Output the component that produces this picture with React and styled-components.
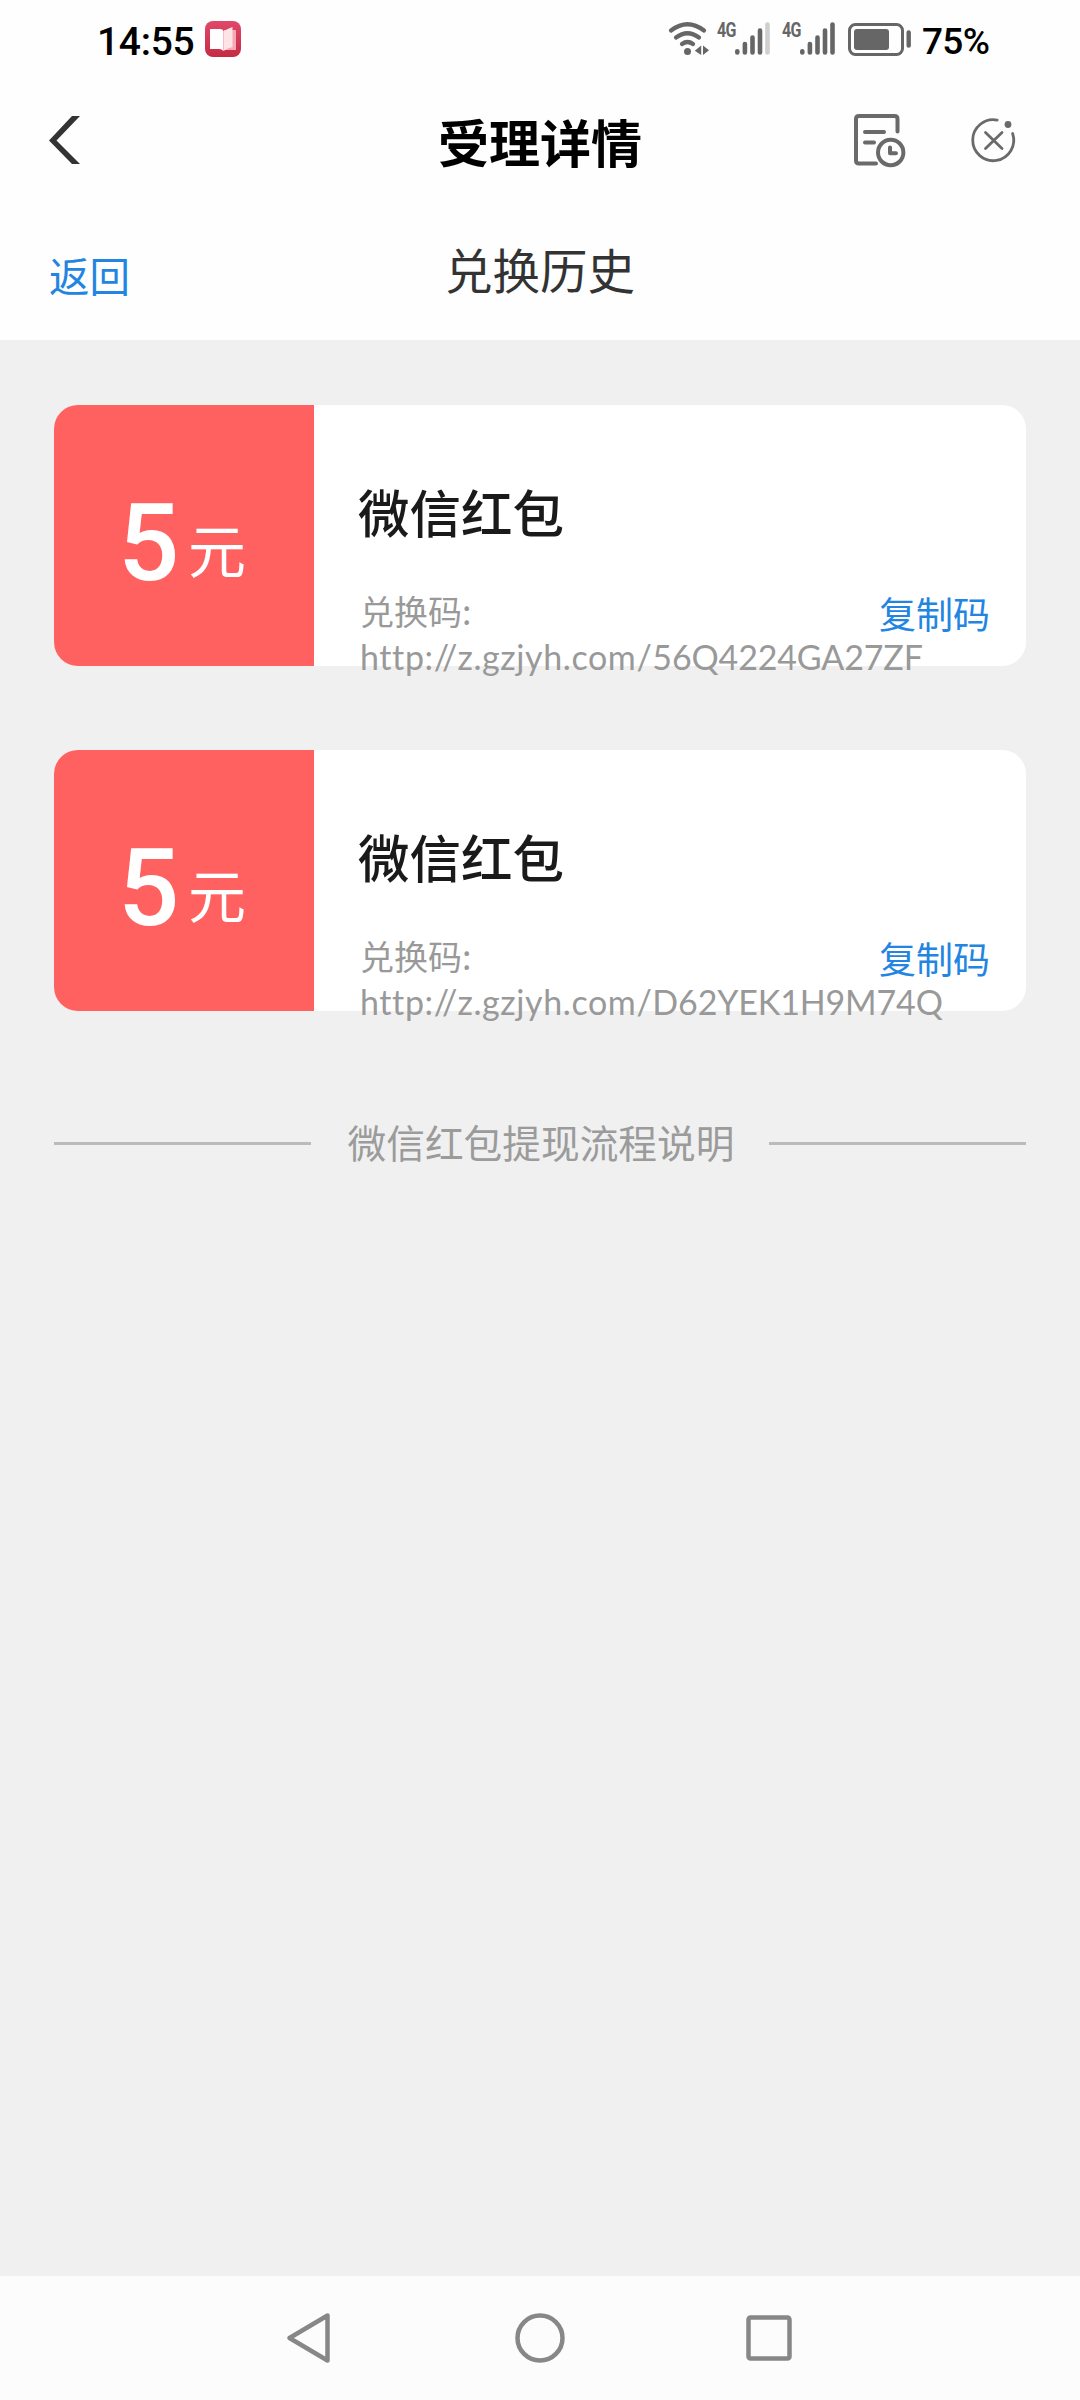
import React from 'react';
import styled, { createGlobalStyle } from 'styled-components';

const Global = createGlobalStyle`
  * { box-sizing: border-box; }
  body { margin: 0; background: #f0f0f0; }
  svg { display: block; flex: none; }
`;

const cjk = `'Noto Sans CJK SC', sans-serif`;

const Screen = styled.div`
  width: 1080px;
  height: 2400px;
  display: flex;
  flex-direction: column;
  background: #f0f0f0;
  font-family: ${cjk};
  white-space: nowrap;
  overflow: hidden;
`;

const StatusBar = styled.div`
  height: 80px;
  display: flex;
  align-items: flex-start;
  justify-content: space-between;
  background: #fefefe;
  padding: 0 90px 0 97px;
`;

const StatusGroup = styled.div`
  display: flex;
  align-items: flex-start;
`;

const Clock = styled.span`
  width: 108px;
  font-family: 'Roboto', sans-serif;
  font-size: 39px;
  line-height: 56px;
  font-weight: 500;
  letter-spacing: -0.3px;
  padding-top: 14px;
  color: #000;
`;

const Percent = styled.span`
  width: 68px;
  margin-left: 10px;
  font-family: 'Roboto', sans-serif;
  font-size: 37px;
  line-height: 54px;
  font-weight: 500;
  letter-spacing: -0.7px;
  padding-top: 15px;
  color: #000;
`;

const Book = styled.div`
  padding-top: 21px;
`;

const Network = styled.span`
  width: 17px;
  margin-left: ${(p) => p.$gap}px;
  padding-top: 19px;
  font-family: 'Roboto', sans-serif;
  font-size: 20px;
  line-height: 22px;
  font-weight: 700;
  letter-spacing: -1px;
  transform: scaleX(0.8);
  transform-origin: left;
  color: #666;
`;

const BatterySlot = styled.div`
  margin-left: 13px;
`;

const NavBar = styled.header`
  height: 120px;
  display: grid;
  grid-template-columns: 1fr auto 1fr;
  align-items: center;
  background: #fefefe;
  padding: 0 48px;
`;

const NavSide = styled.div`
  display: flex;
  align-items: center;
`;

const NavActions = styled(NavSide)`
  justify-content: flex-end;
  gap: 64px;
  padding-right: 14px;
`;

const NavTitle = styled.h1`
  margin: 0;
  padding-top: 1px;
  font-size: 51px;
  line-height: 76px;
  font-weight: 700;
  color: #000;
`;

const SubBar = styled.div`
  height: 140px;
  display: grid;
  grid-template-columns: 1fr auto 1fr;
  align-items: start;
  background: #fefefe;
  padding: 0 48px;
`;

const BackLink = styled.a`
  font-size: 40.5px;
  line-height: 60px;
  padding: 45px 0 0 1px;
  color: #2385e2;
`;

const SubTitle = styled.h2`
  margin: 0;
  padding-top: 34px;
  font-size: 47.5px;
  line-height: 70px;
  font-weight: 400;
  color: #333;
`;

const Content = styled.main`
  flex: 1;
  display: flex;
  flex-direction: column;
  padding: 65px 54px 0;
`;

const Cards = styled.div`
  display: flex;
  flex-direction: column;
  gap: 84px;
`;

const Card = styled.article`
  height: 261px;
  display: flex;
  background: #fff;
  border-radius: 24px;
`;

const Amount = styled.div`
  width: 260px;
  display: flex;
  align-items: flex-start;
  background: #ff6060;
  border-radius: 24px 0 0 24px;
  padding-left: 64px;
  color: #fff;
`;

const Digit = styled.span`
  width: 70px;
  padding-top: 75px;
  font-family: 'Roboto', sans-serif;
  font-size: 108px;
  line-height: 126px;
  font-weight: 500;
`;

const Unit = styled.span`
  padding-top: 103px;
  font-size: 58px;
  line-height: 80px;
  font-weight: 400;
`;

const Info = styled.div`
  flex: 1;
  min-width: 0;
  padding: 68px 36px 0 44px;
`;

const CardTitle = styled.h3`
  margin: 0 0 39px;
  font-size: 51.5px;
  line-height: 76px;
  font-weight: 500;
  color: #1a1a1a;
`;

const CodeRow = styled.div`
  display: flex;
  justify-content: space-between;
  height: 44px;
`;

const Code = styled.div`
  width: 400px;
  padding-left: 2px;
  font-size: 34px;
  line-height: 45px;
  color: #999;
`;

const Url = styled.div`
  margin-top: 1px;
  font-family: 'Lato', ${cjk};
  font-variant-ligatures: none;
  letter-spacing: -0.15px;
`;

const Host = styled.span`
  letter-spacing: 0.6px;
`;

const Copy = styled.a`
  font-size: 37px;
  line-height: 50px;
  color: #2385e2;
`;

const Divider = styled.div`
  display: flex;
  align-items: center;
  justify-content: space-between;
  margin-top: 102px;
  height: 60px;
`;

const DividerText = styled.span`
  font-size: 38.7px;
  line-height: 60px;
  padding: 0 0 5px 2px;
  color: #9b9b9b;
`;

const Rule = styled.span`
  width: 257px;
  height: 3px;
  background: #bbb;
`;

const SystemNav = styled.nav`
  height: 124px;
  display: flex;
  align-items: center;
  justify-content: space-between;
  padding: 0 285px;
  background: #fcfcfc;
`;

const BookIcon = () => (
  <svg width="36" height="36" viewBox="0 0 36 36">
    <defs>
      <linearGradient id="bookBg" x1="0" y1="0" x2="0" y2="1">
        <stop offset="0" stopColor="#e0486a" />
        <stop offset="1" stopColor="#c52c42" />
      </linearGradient>
    </defs>
    <rect width="36" height="36" rx="8" fill="url(#bookBg)" />
    <path d="M19 9h12v20H19z" fill="#f6a9b4" />
    <path d="M5 8h10q3 0 3.500 2v20q-2-2-4-2H5z" fill="#fff" />
    <path d="M18.500 10q4-2 9-4v20q-5 1-9 4z" fill="#fde3e6" />
  </svg>
);

const WifiIcon = () => (
  <svg width="42" height="80" viewBox="668 0 42 80" fill="none" stroke="#666" strokeWidth="4.200" strokeLinecap="round">
    <path d="M671 30.500Q687.500 18 704 30.500" />
    <path d="M676 37.500Q687.500 29 699 37.500" />
    <path d="M682 44Q687.500 40 693 44" />
    <circle cx="687.500" cy="51.500" r="3.500" fill="#666" stroke="none" />
    <path d="M701.200 45.500v9.500l-6.400-4.200zM703 45.500v9.500l6-4.800z" fill="#666" stroke="none" />
  </svg>
);

const SignalIcon = ({ weak }) => (
  <svg width="36" height="80" viewBox="0 0 36 80" stroke="#666" strokeWidth="4.600" strokeLinecap="round">
    <path d="M3.300 51.200v1.300M10.900 44v8.500M18.500 37.500v15M26 30.500v22" />
    <path d="M33.500 24.500v28" stroke={weak ? '#cfcfcf' : '#666'} />
  </svg>
);

const BatteryIcon = () => (
  <svg width="64" height="80" viewBox="848 0 64 80">
    <rect x="849.500" y="24.500" width="53" height="30" rx="6" fill="none" stroke="#666" strokeWidth="3" />
    <rect x="854" y="29" width="35" height="21" rx="3" fill="#666" />
    <path d="M908.700 32.500v13" stroke="#666" strokeWidth="4.400" strokeLinecap="round" />
  </svg>
);

const ChevronIcon = () => (
  <svg width="33" height="50" viewBox="0 0 33 50">
    <path d="M24 1h8L8.500 25.500 32 49h-8L1 25.500z" fill="#333" />
  </svg>
);

const RecordIcon = () => (
  <svg width="56" height="56" viewBox="850 112 56 56" fill="none" stroke="#6a6a6a" strokeWidth="4" strokeLinecap="round" strokeLinejoin="round">
    <path d="M897.500 131.500V119q0-3-3-3H859q-3 0-3 3v41.500q0 3 3 3h17" />
    <path d="M865 132h19M865 142.500h9" />
    <circle cx="890.700" cy="152.500" r="12.700" />
    <path d="M890 147.500v5.800h6" />
  </svg>
);

const CloseIcon = () => (
  <svg width="48" height="48" viewBox="970 116 48 48" fill="none" stroke="#6a6a6a" strokeWidth="2.800" strokeLinecap="round">
    <path d="M997.200 120.100A20.500 20.500 0 1 0 1012.600 133.500" />
    <circle cx="1008" cy="124.500" r="3.400" fill="#6a6a6a" stroke="none" />
    <path d="M985.500 132.500l16.500 16M1002 132.500l-16.500 16" />
  </svg>
);

const host = 'http://z.gzjyh.com/';
const vouchers = ['56Q4224GA27ZF', 'D62YEK1H9M74Q'];

export default function App() {
  return (
    <Screen>
      <Global />
      <StatusBar>
        <StatusGroup>
          <Clock>14:55</Clock>
          <Book><BookIcon /></Book>
        </StatusGroup>
        <StatusGroup>
          <WifiIcon />
          <Network $gap={7}>4G</Network>
          <SignalIcon weak />
          <Network $gap={12}>4G</Network>
          <SignalIcon />
          <BatterySlot><BatteryIcon /></BatterySlot>
          <Percent>75%</Percent>
        </StatusGroup>
      </StatusBar>
      <NavBar>
        <NavSide><ChevronIcon /></NavSide>
        <NavTitle>受理详情</NavTitle>
        <NavActions>
          <RecordIcon />
          <CloseIcon />
        </NavActions>
      </NavBar>
      <SubBar>
        <BackLink>返回</BackLink>
        <SubTitle>兑换历史</SubTitle>
      </SubBar>
      <Content>
        <Cards>
          {vouchers.map((code) => (
            <Card key={code}>
              <Amount>
                <Digit>5</Digit>
                <Unit>元</Unit>
              </Amount>
              <Info>
                <CardTitle>微信红包</CardTitle>
                <CodeRow>
                  <Code>
                    兑换码:
                    <Url><Host>{host}</Host>{code}</Url>
                  </Code>
                  <Copy>复制码</Copy>
                </CodeRow>
              </Info>
            </Card>
          ))}
        </Cards>
        <Divider>
          <Rule />
          <DividerText>微信红包提现流程说明</DividerText>
          <Rule />
        </Divider>
      </Content>
      <SystemNav>
        <svg width="49" height="54" viewBox="0 0 49 54" fill="none" stroke="#878787" strokeWidth="4.500" strokeLinejoin="round">
          <path d="M42.500 4.500v45L4.500 27z" />
        </svg>
        <svg width="50" height="50" viewBox="0 0 50 50" fill="none" stroke="#878787" strokeWidth="4.500">
          <circle cx="25" cy="25" r="22.500" />
        </svg>
        <svg width="49" height="46" viewBox="0 0 49 46" fill="none" stroke="#878787" strokeWidth="4.500">
          <rect x="2.500" y="2.500" width="41" height="41" rx="2" />
        </svg>
      </SystemNav>
    </Screen>
  );
}
